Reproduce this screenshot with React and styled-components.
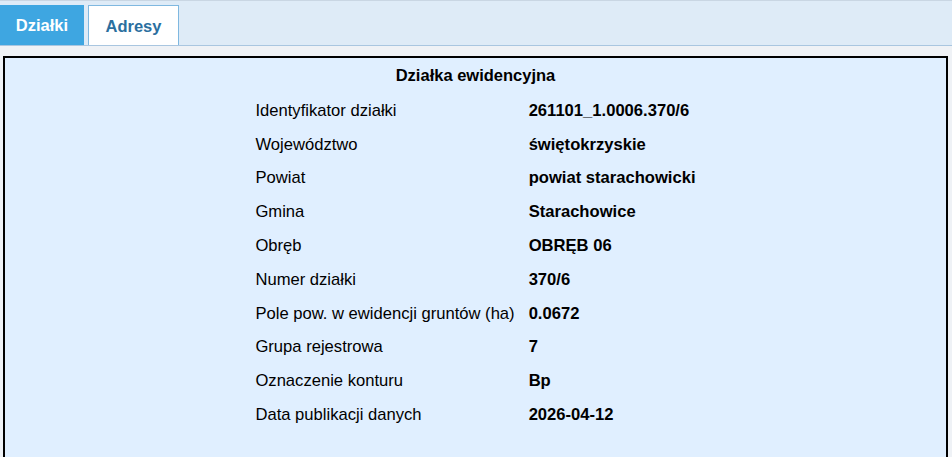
import styled, { createGlobalStyle } from "styled-components";

const GlobalStyle = createGlobalStyle`
  html, body {
    margin: 0;
    padding: 0;
    background: #eff2f6;
    font-family: "Liberation Sans", Arial, sans-serif;
  }
`;

const Page = styled.div`
  width: 952px;
  height: 457px;
  overflow: hidden;
`;

const TabBar = styled.div`
  display: flex;
  gap: 4px;
  height: 40px;
  padding-top: 4px;
  background: #deebf7;
  border-top: 1px solid #c9d6e3;
  border-bottom: 1px solid #a9c6e0;
  box-sizing: content-box;
  align-items: flex-end;
`;

const Tab = styled.div`
  box-sizing: border-box;
  height: 40px;
  display: flex;
  align-items: center;
  justify-content: center;
  padding: 1px 12px 0;
  font-size: 16.5px;
  font-weight: bold;
  ${(p) =>
    p.$active
      ? `
    background: #3ea6e1;
    color: #ffffff;
    border: 1px solid #3ea6e1;
    width: 84px;
  `
      : `
    background: #ffffff;
    color: #2b6f9f;
    border: 1px solid #7fb8e0;
    border-bottom: none;
    width: 91px;
  `}
`;

const Panel = styled.div`
  margin: 10px 4px 0 3px;
  background: #e0efff;
  border: 2px solid #000;
  height: 420px;
  box-sizing: border-box;
  padding-top: 8px;
`;

const Title = styled.div`
  text-align: center;
  font-size: 16.5px;
  font-weight: bold;
  color: #000;
  margin-bottom: 9px;
`;

const Table = styled.table`
  margin: 0 auto;
  border-collapse: collapse;
  font-size: 16.6px;
  color: #000;
`;

const Label = styled.td`
  padding: 0 14px 0 0;
  height: 33.8px;
  white-space: nowrap;
`;

const Value = styled.td`
  font-weight: bold;
  white-space: nowrap;
  padding: 0;
`;

const rows = [
  ["Identyfikator działki", "261101_1.0006.370/6"],
  ["Województwo", "świętokrzyskie"],
  ["Powiat", "powiat starachowicki"],
  ["Gmina", "Starachowice"],
  ["Obręb", "OBRĘB 06"],
  ["Numer działki", "370/6"],
  ["Pole pow. w ewidencji gruntów (ha)", "0.0672"],
  ["Grupa rejestrowa", "7"],
  ["Oznaczenie konturu", "Bp"],
  ["Data publikacji danych", "2026-04-12"],
];

export default function App() {
  return (
    <Page>
      <GlobalStyle />
      <TabBar>
        <Tab $active>Działki</Tab>
        <Tab>Adresy</Tab>
      </TabBar>
      <Panel>
        <Title>Działka ewidencyjna</Title>
        <Table>
          <tbody>
            {rows.map(([k, v]) => (
              <tr key={k}>
                <Label>{k}</Label>
                <Value>{v}</Value>
              </tr>
            ))}
          </tbody>
        </Table>
      </Panel>
    </Page>
  );
}
